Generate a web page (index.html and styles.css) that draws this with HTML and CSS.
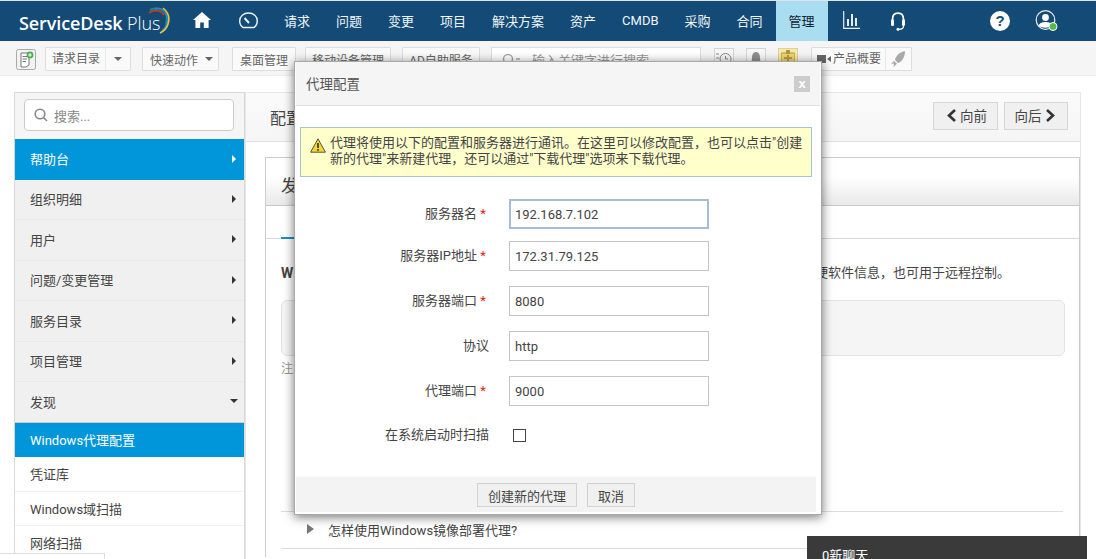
FILE: index.html
```html
<!DOCTYPE html>
<html lang="zh">
<head>
<meta charset="utf-8">
<title>ServiceDesk Plus</title>
<link rel="stylesheet" href="styles.css">
</head>
<body>
<div class="page">
  <header class="topbar">
    <div class="logo">
      <span class="logo-bold">ServiceDesk</span> <span class="logo-light">Plus</span>
      <svg class="logo-arc" width="26" height="28" viewBox="0 0 26 28" fill="none">
        <path d="M3 6 C8 2 15 3 18 8" stroke="#c0392b" stroke-width="2"/>
        <path d="M4 3 C10 0 17 1 20 7 C21 10 21 14 20 17" stroke="#1f8a70" stroke-width="2"/>
        <path d="M9 2 C15 0 20 4 21 10 C22 15 20 20 16 24" stroke="#2a86c8" stroke-width="1.5"/>
        <path d="M17 1 C22 5 24 11 22 17 C21 21 18 24 14 26" stroke="#e8c63a" stroke-width="1.6"/>
      </svg>
    </div>
    <svg class="ico-home" width="18" height="16" viewBox="0 0 18 16"><path d="M9 0 L18 8 L15.6 8 L15.6 16 L10.8 16 L10.8 10.5 L7.2 10.5 L7.2 16 L2.4 16 L2.4 8 L0 8 Z" fill="#fff"/></svg>
    <svg class="ico-gauge" width="19" height="17" viewBox="0 0 19 17" fill="none" stroke="#eef3f7" stroke-width="1.4"><path d="M4 15.5 C1.800 14 .7 11.500 .7 9 C.7 4.300 4.500 1 9.500 1 C14.500 1 18.300 4.300 18.300 9 C18.300 11.500 17.200 14 15 15.500 Z"/><path d="M5.500 6 L10 11" stroke-width="2"/></svg>
    <nav class="nav">
      <a class="nav-item">请求</a>
      <a class="nav-item">问题</a>
      <a class="nav-item">变更</a>
      <a class="nav-item">项目</a>
      <a class="nav-item">解决方案</a>
      <a class="nav-item">资产</a>
      <a class="nav-item">CMDB</a>
      <a class="nav-item">采购</a>
      <a class="nav-item">合同</a>
      <a class="nav-item nav-active">管理</a>
    </nav>
    <svg class="ico-chart" width="17" height="18" viewBox="0 0 17 18" fill="none" stroke="#e6eef4"><path d="M.7 0 V17.300 H17" stroke-width="1.200"/><path d="M5 8 V15 M9 3 V15 M13 7 V15" stroke-width="2"/></svg>
    <svg class="ico-head" width="16" height="19" viewBox="0 0 16 19" fill="none" stroke="#fff"><path d="M2.500 10 V7.500 C2.500 3.500 4.800 1.200 8 1.200 C11.200 1.200 13.500 3.500 13.500 7.500 V10" stroke-width="1.800"/><rect x="1" y="7.500" width="3" height="6.500" rx="1.200" fill="#fff" stroke="none"/><rect x="12" y="7.500" width="3" height="6.500" rx="1.200" fill="#fff" stroke="none"/><path d="M13.500 14 C13.500 16 11.500 17.300 9 17.300" stroke-width="1.200"/><circle cx="8" cy="17.300" r="1.500" fill="#fff" stroke="none"/></svg>
    <div class="top-right">
      <span class="help">?</span>
      <svg class="ico-user" width="23" height="22" viewBox="0 0 23 22" fill="none"><circle cx="10.500" cy="10" r="9.300" stroke="#e6eef4" stroke-width="1.200"/><circle cx="10.500" cy="7.500" r="3.400" fill="#fff"/><path d="M3.500 15.500 C5 12.500 8 12 10.500 12 C13 12 16 12.500 17.500 15.500 C15 18.500 6 18.500 3.500 15.500Z" fill="#fff"/><circle cx="18" cy="16.500" r="4" fill="#58b947" stroke="#fff"/></svg>
    </div>
  </header>

  <div class="toolbar">
    <svg class="ico-note" width="20" height="21" viewBox="0 0 20 21" fill="none"><rect x=".5" y=".5" width="19" height="20" rx="2" fill="#f2f2f2" stroke="#a9a9a9"/><path d="M5 4 H13 V16 L10 18 H5 Z" fill="#fff" stroke="#777"/><path d="M6.500 7.500 H11 M6.500 10 H11 M6.500 12.500 H10" stroke="#777"/><circle cx="14" cy="6" r="3.400" fill="#4caf50"/><path d="M12.200 6 H15.800 M14 4.200 V7.800" stroke="#fff"/></svg>
    <div class="tool-btn tool-split"><span class="split-text">请求目录</span><span class="split-caret"><i class="caret"></i></span></div>
    <div class="tool-btn tool-quick">快速动作<i class="caret"></i></div>
    <div class="tool-btn tool-desk">桌面管理</div>
    <div class="tool-btn tool-mobile">移动设备管理</div>
    <div class="tool-btn tool-ad">AD自助服务</div>
    <div class="tool-search">
      <svg width="18" height="13" viewBox="0 0 18 13" fill="none" stroke="#aaa"><circle cx="6" cy="6" r="4.500" stroke-width="1.500"/><path d="M9.500 9.500 L12 12" stroke-width="1.500"/><path d="M14 6 H18" stroke-width="1.500"/></svg>
      <span>输入关键字进行搜索</span>
    </div>
    <div class="tool-icons">
      <div class="icon-box"><svg width="16" height="14" viewBox="0 0 16 14" fill="none" stroke="#888"><path d="M0 2 H3 M0 6 H3 M0 10 H3"/><circle cx="9.500" cy="7" r="5.500"/><path d="M9.500 4 V7 H12"/></svg></div>
      <div class="icon-box"><svg width="12" height="14" viewBox="0 0 12 14"><path d="M6 0 C9 0 10 3 10 6 C10 9 11 10 12 11 H0 C1 10 2 9 2 6 C2 3 3 0 6 0Z M4.500 12 H7.500 V14 H4.500Z" fill="#8f8f8f"/></svg></div>
      <div class="icon-box icon-yellow"><svg width="14" height="18" viewBox="0 0 14 18"><rect y="3" width="14" height="15" rx="1" fill="#f2d66b" stroke="#b3973a"/><rect x="5" y="0" width="4" height="4" fill="#b3973a"/><path d="M3 8 H6 M8 8 H11 M3 12 H6 M8 12 H11 M7 5 V16" stroke="#7a6320"/></svg></div>
    </div>
    <div class="tool-btn tool-tour">
      <svg width="14" height="8" viewBox="0 0 14 8"><rect width="9" height="8" fill="#666"/><path d="M10 4 L14 1 V7 Z" fill="#666"/></svg>
      <span class="tour-text">产品概要</span>
      <span class="tour-rocket"><svg width="15" height="17" viewBox="0 0 15 17"><path d="M14 0 C9 1 5 4 4 9 L7 12 C11 11 14 6 14 0Z M3 10 L0 13 L3 12.500 L2.500 16 L6 12.800Z" fill="#a9a9a9"/></svg></span>
    </div>
  </div>

  <div class="content">
    <aside class="sidebar">
      <div class="side-search">
        <div class="side-input">
          <svg width="14" height="14" viewBox="0 0 14 14" fill="none" stroke="#888" stroke-width="1.600"><circle cx="6" cy="6" r="4.800"/><path d="M9.500 9.500 L13 13"/></svg>
          <span>搜索...</span>
        </div>
      </div>
      <div class="side-item side-blue">帮助台<i class="arrow arrow-white"></i></div>
      <div class="side-item">组织明细<i class="arrow"></i></div>
      <div class="side-item">用户<i class="arrow"></i></div>
      <div class="side-item">问题/变更管理<i class="arrow"></i></div>
      <div class="side-item">服务目录<i class="arrow"></i></div>
      <div class="side-item">项目管理<i class="arrow"></i></div>
      <div class="side-item side-open">发现<i class="caret-dark"></i></div>
      <div class="sub-item sub-active">Windows代理配置</div>
      <div class="sub-item">凭证库</div>
      <div class="sub-item">Windows域扫描</div>
      <div class="sub-item">网络扫描</div>
    </aside>

    <main class="main">
      <div class="main-head">
        <h1 class="main-title">配置向导</h1>
        <div class="pager">
          <button class="pager-btn pager-prev"><svg width="9" height="13" viewBox="0 0 9 13" fill="none" stroke="#333" stroke-width="2.600"><path d="M8 1 L2 6.500 L8 12"/></svg>向前</button>
          <button class="pager-btn pager-next">向后<svg width="9" height="13" viewBox="0 0 9 13" fill="none" stroke="#333" stroke-width="2.600"><path d="M1 1 L7 6.500 L1 12"/></svg></button>
        </div>
      </div>
      <section class="panel">
        <div class="panel-head">发现</div>
        <div class="tabs"><span class="tab-active"></span></div>
        <div class="panel-body">
          <p class="intro"><b>Windows代理</b><span>硬软件信息，也可用于远程控制。</span></p>
          <div class="grey-box"></div>
          <p class="hint">注意</p>
          <div class="faq">
            <div class="faq-row"><i class="faq-arrow"></i>怎样使用Windows镜像部署代理?</div>
          </div>
        </div>
      </section>
    </main>
  </div>

  <div class="corner-box"></div>

  <div class="modal">
    <div class="modal-head"><span>代理配置</span><span class="modal-close">x</span></div>
    <div class="notice">
      <svg width="16" height="15" viewBox="0 0 16 15"><path d="M8 .8 L15.400 14.200 H.6 Z" fill="#f7d735" stroke="#55534a" stroke-linejoin="round"/><path d="M8 5 V10 M8 11 V12.800" stroke="#222" stroke-width="1.500"/></svg>
      <p>代理将使用以下的配置和服务器进行通讯。在这里可以修改配置，也可以点击"创建新的代理"来新建代理，还可以通过"下载代理"选项来下载代理。</p>
    </div>
    <form class="form">
      <div class="row row-first"><label class="lbl">服务器名<em>*</em></label><input class="field field-focus" value="192.168.7.102"></div>
      <div class="row"><label class="lbl">服务器IP地址<em>*</em></label><input class="field" value="172.31.79.125"></div>
      <div class="row"><label class="lbl">服务器端口<em>*</em></label><input class="field" value="8080"></div>
      <div class="row"><label class="lbl lbl-plain">协议</label><input class="field field-plain" value="http"></div>
      <div class="row"><label class="lbl">代理端口<em>*</em></label><input class="field" value="9000"></div>
      <div class="row row-check"><label class="lbl lbl-plain">在系统启动时扫描</label><span class="check"></span></div>
    </form>
    <div class="modal-foot">
      <button class="foot-btn">创建新的代理</button>
      <button class="foot-btn">取消</button>
    </div>
  </div>

  <div class="chat">0新聊天</div>
</div>
</body>
</html>
```

FILE: styles.css
```css
* { box-sizing: border-box; }
html, body { margin: 0; padding: 0; }
body {
  font-family: Roboto, "Noto Sans CJK SC", sans-serif;
  font-size: 13px;
  color: #444;
  background: #fff;
}
.page { position: relative; width: 1096px; height: 559px; overflow: hidden; }

/* top bar */
.topbar {
  display: flex; align-items: center;
  height: 41px; background: #134b76;
  border-top: 1px solid #dfe7ec;
  color: #fff;
}
.logo { position: relative; width: 143px; margin-left: 19px; font-family: "Open Sans", sans-serif; font-size: 18px; white-space: nowrap; letter-spacing: -.1px; padding-top: 3px; }
.logo-bold { font-weight: 600; }
.logo-light { font-weight: 300; }
.logo-arc { position: absolute; left: 127px; top: -1px; }
.ico-home { margin-left: 31px; margin-top: -3px; flex: none; }
.ico-gauge { margin-left: 28px; margin-top: -2px; flex: none; }
.nav { display: flex; margin-left: 13px; align-self: stretch; }
.nav-item { display: flex; align-items: center; padding: 0 13px 1px; color: #f1f5f8; font-size: 13px; }
.nav-active { background: #a9def1; color: #123; }
.ico-chart { margin-left: 15px; margin-top: -3px; flex: none; }
.ico-head { margin-left: 30px; margin-top: 0; flex: none; }
.top-right { margin-left: auto; display: flex; align-items: center; gap: 25px; padding-right: 38px; }
.help { width: 20px; height: 20px; border-radius: 50%; background: #fff; color: #134b76; font: 700 15px/20px "Liberation Sans", sans-serif; text-align: center; }

/* toolbar */
.toolbar {
  display: flex; align-items: center;
  height: 35px; padding: 2px 0 0 16px;
  background: #f5f5f5; border-bottom: 1px solid #eee;
  font-size: 12px; color: #666;
}
.ico-note { flex: none; }
.tool-btn { display: flex; align-items: center; height: 24px; background: #fafafa; border: 1px solid #ddd; border-radius: 1px; white-space: nowrap; }
.tool-split { margin-left: 9px; width: 86px; }
.split-text { padding: 0 6px; width: 60px; border-right: 1px solid #e8e8e8; line-height: 22px; }
.split-caret { flex: 1; display: flex; justify-content: center; }
.caret { display: inline-block; width: 0; height: 0; border-left: 4px solid transparent; border-right: 4px solid transparent; border-top: 4px solid #666; }
.tool-quick { margin-left: 11px; width: 77px; padding-left: 7px; gap: 7px; }
.tool-desk { margin-left: 13px; width: 64px; justify-content: center; }
.tool-mobile { margin-left: 9px; width: 86px; justify-content: center; }
.tool-ad { margin-left: 11px; width: 78px; justify-content: center; }
.tool-search { display: flex; align-items: center; gap: 12px; margin-left: 11px; width: 210px; height: 24px; padding-left: 10px; background: #fff; border: 1px solid #ddd; color: #999; font-size: 13px; }
.tool-icons { display: flex; gap: 12px; margin-left: 13px; }
.icon-box { display: flex; align-items: center; justify-content: center; width: 20px; height: 22px; border: 1px solid #d5d5d5; background: #f7f7f7; }
.icon-yellow { background: #f5e9b4; border-color: #e2d38f; }
.tool-tour { margin-left: 13px; width: 101px; padding-left: 5px; gap: 2px; }
.tour-text { line-height: 22px; }
.tour-rocket { display: flex; align-items: center; justify-content: center; flex: 1; height: 22px; margin-left: 2px; border-left: 1px solid #e8e8e8; }

/* content */
.content { display: flex; align-items: flex-start; padding: 16px 15px 0 14px; }
.sidebar { flex: none; width: 231px; border: 1px solid #d8d8d8; border-bottom: 0; background: #fff; }
.side-search { height: 46px; padding: 6px 10px 0 9px; background: #f5f5f5; }
.side-input { display: flex; align-items: center; gap: 6px; height: 32px; padding-left: 9px; background: #fff; border: 1px solid #ccc; border-radius: 4px; color: #888; }
.side-item { position: relative; display: flex; align-items: center; justify-content: space-between; height: 40.500px; padding: 0 8px 1px 15px; background: #f0f0f0; border-bottom: 1px solid #e9e9e9; color: #444; }
.side-blue { background: #0096d9; color: #fff; border-bottom: 0; }
.side-open { border-bottom: 1px solid #ccc; }
.arrow { width: 0; height: 0; border-top: 4px solid transparent; border-bottom: 4px solid transparent; border-left: 4px solid #333; }
.arrow-white { border-left-color: #fff; }
.caret-dark { width: 0; height: 0; border-left: 4px solid transparent; border-right: 4px solid transparent; border-top: 4px solid #333; margin-right: -2px; }
.sub-item { display: flex; align-items: center; height: 34.500px; padding-left: 15px; background: #fff; border-bottom: 1px solid #f1f1f1; color: #444; }
.sub-active { background: #0096d9; color: #fff; border-bottom: 0; }

.main { flex: 1; min-width: 0; height: 480px; border: 1px solid #e6e6e6; }
.main-head { display: flex; align-items: center; justify-content: space-between; height: 49px; padding: 0 12px 0 24px; background: linear-gradient(#fbfbfb, #f5f5f5); border-bottom: 1px solid #e2e2e2; }
.main-title { margin: 0; font-size: 16px; font-weight: 400; color: #444; }
.pager { display: flex; gap: 6px; align-self: flex-start; margin-top: 9px; }
.pager-btn { display: flex; align-items: center; justify-content: center; gap: 4px; width: 65px; height: 28px; padding: 0 0 2px; background: #f0f0f0; border: 1px solid #d6d6d6; font: 13.500px Roboto, "Noto Sans CJK SC", sans-serif; color: #444; }
.pager-prev { padding-left: 3px; }
.pager-next { width: 64px; padding-right: 3px; }
.panel { margin: 15px 0 0 19px; height: 400px; border: 1px solid #ccc; border-bottom: 0; }
.panel-head { height: 48px; padding: 14px 0 0 15px; font-size: 17px; background: linear-gradient(#fff 40%, #e9e9e9); border-bottom: 1px solid #c8c8c8; }
.tabs { position: relative; height: 33px; border-bottom: 1px solid #d8d8d8; }
.tab-active { position: absolute; left: 15px; bottom: -1px; width: 120px; height: 2px; background: #1b8fc4; }
.panel-body { padding: 0 15px; }
.intro { display: flex; justify-content: space-between; width: 729px; margin: 25px 0 0; color: #444; line-height: 18px; }
.intro b { font-weight: 700; font-size: 14px; }
.grey-box { height: 56px; margin-top: 18px; width: 784px; background: #f5f5f5; border: 1px solid #e3e3e3; border-radius: 6px; }
.hint { margin: 3px 0 0; font-size: 12px; color: #999; }
.faq { margin-top: 135px; width: 782px; border-top: 1px solid #ddd; border-bottom: 1px solid #ddd; }
.faq-row { display: flex; align-items: center; height: 36px; padding: 0 0 2px 26px; color: #444; }
.faq-arrow { width: 0; height: 0; margin-right: 14px; border-top: 5px solid transparent; border-bottom: 5px solid transparent; border-left: 7px solid #777; }

.corner-box { position: absolute; left: -1px; top: 553px; width: 106px; height: 10px; background: #fff; border: 1px solid #ddd; }

/* modal */
.modal {
  position: absolute; left: 294px; top: 61px;
  width: 528px; height: 454px;
  padding: 0 5px 2px 1px;
  display: flex; flex-direction: column;
  background: #fff; border: 1px solid #a9a9a9;
  box-shadow: 0 2px 10px rgba(0, 0, 0, .55);
}
.modal-head { display: flex; align-items: center; justify-content: space-between; flex: none; height: 44px; margin-right: -4px; padding: 0 10px 2px 10px; background: #f5f5f5; border-bottom: 1px solid #e2e2e2; font-size: 13.500px; color: #555; }
.modal-close { width: 16px; height: 16px; margin-top: 2px; background: #ccc; color: #fff; font: 700 13px/15px "Liberation Sans", sans-serif; text-align: center; }
.notice { display: flex; flex: none; gap: 4px; width: 512px; height: 50px; margin: 21px 0 0 4px; padding: 7px 5px 0 9px; background: #ffc; border: 1px solid #a9c2d4; color: #444; }
.notice svg { flex: none; margin-top: 3px; }
.notice p { margin: 0; line-height: 16px; font-size: 13px; }
.form { flex: 1; padding-top: 22px; }
.row { display: flex; align-items: center; height: 30px; margin-bottom: 15px; }
.row-first { margin-bottom: 12px; }
.lbl { display: block; width: 191px; padding-bottom: 3px; text-align: right; color: #444; }
.lbl em { display: inline-block; width: 8px; margin-left: 2px; color: #e02020; font-style: normal; text-align: center; }
.lbl-plain { width: 193px; }
.field { width: 200px; height: 30px; margin-left: 22px; padding: 0 5px; border: 1px solid #c4c4c4; background: #fff; font: 13px Roboto, "Noto Sans CJK SC", sans-serif; color: #444; outline: 0; }
.field-plain { margin-left: 20px; }
.field-focus { border: 2px solid #a8bcd8; padding: 0 4px; }
.row-check { margin-top: -1px; }
.check { width: 13px; height: 13px; margin-left: 24px; border: 1.500px solid #444; background: #fff; }
.modal-foot { display: flex; flex: none; justify-content: center; gap: 10px; height: 35px; padding: 6px 0 0; background: #f3f3f3; }
.foot-btn { height: 24px; padding: 0 10px; background: #f0f0f0; border: 1px solid #d2d2d2; font: 13px Roboto, "Noto Sans CJK SC", sans-serif; color: #444; }

.chat { position: absolute; left: 807px; top: 536px; width: 280px; height: 30px; padding: 9px 0 0 15px; background: #3a3a3a; color: #fff; font-size: 13px; }
```
